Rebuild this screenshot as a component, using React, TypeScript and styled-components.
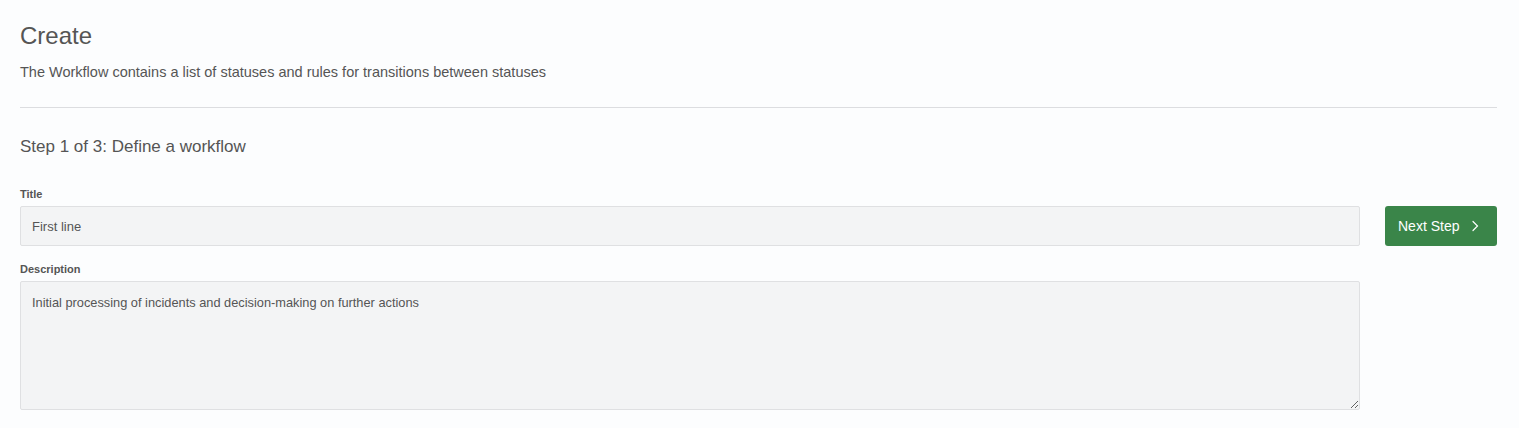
import styled, { createGlobalStyle } from "styled-components";

const GlobalStyle = createGlobalStyle`
    html, body {
        margin: 0;
        background: #fcfdfe;
        font-family: "Liberation Sans", Arial, sans-serif;
        color: #555;
    }
`

export default function App() {
    return (
        <Page>
            <GlobalStyle/>
            <Header>
                <PageTitle>Create</PageTitle>
                <PageSubtitle>The Workflow contains a list of statuses and rules for transitions between statuses</PageSubtitle>
            </Header>
            <Divider/>
            <StepTitle>Step 1 of 3: Define a workflow</StepTitle>
            <FormRow>
                <Fields>
                    <Field>
                        <Label>Title</Label>
                        <Input defaultValue={'First line'}/>
                    </Field>
                    <Field>
                        <Label>Description</Label>
                        <TextArea defaultValue={'Initial processing of incidents and decision-making on further actions'}/>
                    </Field>
                </Fields>
                <NextButton>
                    Next Step
                    <svg width="14" height="14" viewBox="0 0 14 14" fill="none">
                        <path d="M5 2.5L9.5 7L5 11.5" stroke="#fff" strokeWidth="1.2" strokeLinecap="round"/>
                    </svg>
                </NextButton>
            </FormRow>
        </Page>
    );
}

const Page = styled.div`
    padding: 20px 22px 0 20px;
`
const Header = styled.div`
    display: flex;
    flex-direction: column;
    gap: 10px;
`
const PageTitle = styled.h1`
    margin: 0;
    font-size: 24px;
    font-weight: 400;
    line-height: 32px;
    color: #555;
`
const PageSubtitle = styled.p`
    margin: 0;
    font-size: 14.5px;
    line-height: 20px;
    color: #555;
`
const Divider = styled.hr`
    margin: 25px 0 0;
    border: none;
    border-top: 1px solid #dcdde0;
`
const StepTitle = styled.h2`
    margin: 27px 0 0;
    font-size: 17px;
    font-weight: 400;
    line-height: 24px;
    color: #555;
`
const FormRow = styled.div`
    display: flex;
    align-items: flex-start;
    gap: 25px;
    margin-top: 29px;
`
const Fields = styled.div`
    flex: 1;
    display: flex;
    flex-direction: column;
    gap: 17px;
`
const Field = styled.div`
    display: flex;
    flex-direction: column;
    gap: 5px;
`
const Label = styled.label`
    font-size: 11px;
    font-weight: 700;
    line-height: 13px;
    color: #555;
`
const Input = styled.input`
    box-sizing: border-box;
    height: 40px;
    padding: 0 11px;
    background: #f3f4f5;
    border: 1px solid #dfe0e2;
    border-radius: 2px;
    font-family: inherit;
    font-size: 13px;
    color: #555;
    outline: none;
`
const TextArea = styled.textarea`
    box-sizing: border-box;
    height: 129px;
    padding: 12px 11px;
    background: #f3f4f5;
    border: 1px solid #dfe0e2;
    border-radius: 2px;
    font-family: inherit;
    font-size: 12.8px;
    line-height: 18px;
    color: #555;
    outline: none;
    resize: vertical;
`
const NextButton = styled.button`
    display: flex;
    align-items: center;
    gap: 9px;
    box-sizing: border-box;
    width: 112px;
    height: 40px;
    margin-top: 18px;
    padding: 0 13px;
    background: #3a8549;
    border: none;
    border-radius: 3px;
    font-family: inherit;
    font-size: 14px;
    color: #fff;
    cursor: pointer;
`
